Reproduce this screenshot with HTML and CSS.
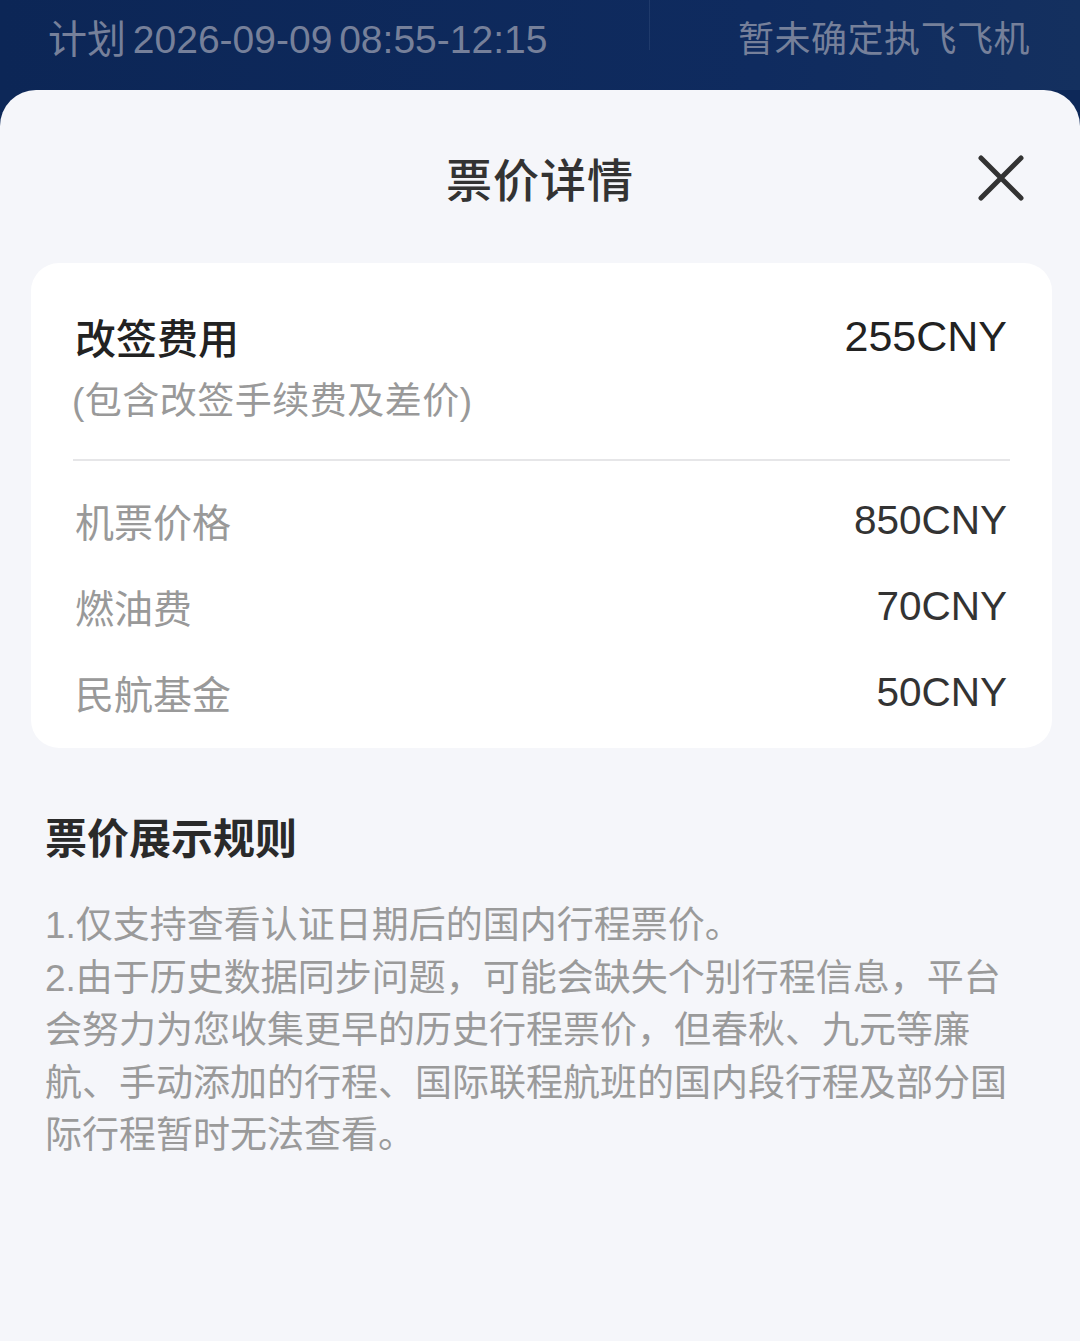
FILE: index.html
```html
<!DOCTYPE html>
<html lang="zh-CN">
<head>
    <meta charset="UTF-8">
    <meta name="viewport" content="width=device-width, initial-scale=1.0">
    <title>票价详情</title>
    <link rel="stylesheet" href="styles.css">
</head>
<body>

    <!-- Flight bar behind the sheet -->
    <div class="flight-bar">
        <span class="flight-time">计划 2026-09-09 08:55-12:15</span>
        <span class="flight-divider"></span>
        <span class="flight-plane">暂未确定执飞飞机</span>
    </div>

    <div class="sheet">
        <div class="sheet-header">
            <h1>票价详情</h1>
            <button class="close-btn" aria-label="关闭">
                <svg width="48" height="48" viewBox="0 0 48 48">
                    <path d="M4 4 L44 44 M44 4 L4 44" stroke="#333" stroke-width="5" stroke-linecap="round" fill="none"/>
                </svg>
            </button>
        </div>

        <div class="price-card">
            <div class="fee-main">
                <div class="fee-row">
                    <span class="fee-title">改签费用</span>
                    <span class="fee-total">255CNY</span>
                </div>
                <p class="fee-note">(包含改签手续费及差价)</p>
            </div>
            <div class="card-line"></div>
            <div class="price-row">
                <span class="price-label">机票价格</span>
                <span class="price-value">850CNY</span>
            </div>
            <div class="price-row">
                <span class="price-label">燃油费</span>
                <span class="price-value">70CNY</span>
            </div>
            <div class="price-row">
                <span class="price-label">民航基金</span>
                <span class="price-value">50CNY</span>
            </div>
        </div>

        <div class="rules">
            <h2>票价展示规则</h2>
            <p>1.仅支持查看认证日期后的国内行程票价。<br>2.由于历史数据同步问题，可能会缺失个别行程信息，平台会努力为您收集更早的历史行程票价，但春秋、九元等廉航、手动添加的行程、国际联程航班的国内段行程及部分国际行程暂时无法查看。</p>
        </div>
    </div>

</body>
</html>
```

FILE: styles.css
```css
body {
    margin: 0;
    background-color: #0d2858;
    font-family: "Liberation Sans", "Noto Sans CJK SC", sans-serif;
}
.flight-bar {
    height: 90px;
    display: flex;
    align-items: flex-start;
    padding: 0 50px 0 48px;
    color: #76809a;
    font-size: 36px;
    line-height: 80px;
    background: linear-gradient(90deg, #0c2656 0%, #0f2b5f 70%, #14305f 100%);
}
.flight-time {
    flex: 1;
    font-size: 39px;
    word-spacing: -4px;
}
.flight-divider {
    width: 1px;
    height: 50px;
    background-color: #1f3a6b;
    margin-right: 88px;
}
.flight-plane {
    letter-spacing: 0.5px;
}
.sheet {
    background-color: #f5f6fa;
    border-radius: 36px 36px 0 0;
    min-height: 1251px;
    padding-bottom: 40px;
    box-sizing: border-box;
}
.sheet-header {
    position: relative;
    height: 173px;
    display: flex;
    align-items: center;
    justify-content: center;
}
.sheet-header h1 {
    margin: 0;
    font-size: 46px;
    font-weight: 500;
    color: #333;
    letter-spacing: 1px;
}
.close-btn {
    position: absolute;
    right: 55px;
    top: 64px;
    padding: 0;
    border: none;
    background: none;
    width: 48px;
    height: 48px;
}
.price-card {
    margin: 0 28px 0 31px;
    background-color: #fff;
    border-radius: 28px;
    padding: 45px 45px 13px 44px;
}
.fee-row {
    display: flex;
    justify-content: space-between;
    align-items: center;
    height: 56px;
    color: #222;
}
.fee-title {
    font-size: 41px;
    font-weight: 500;
}
.fee-total {
    font-size: 43px;
}
.fee-note {
    margin: 14px 0 0 -3px;
    font-size: 37px;
    line-height: 48px;
    color: #999;
    letter-spacing: 0.5px;
}
.card-line {
    height: 2px;
    background-color: #e6e6e8;
    margin: 33px -3px 16px -2px;
}
.price-row {
    display: flex;
    justify-content: space-between;
    align-items: center;
    height: 86px;
}
.price-label {
    font-size: 39px;
    color: #999;
}
.price-value {
    font-size: 40.5px;
    color: #333;
}
.rules {
    padding: 64px 60px 0 45px;
}
.rules h2 {
    margin: 0;
    font-size: 42px;
    line-height: 56px;
    font-weight: 700;
    color: #2a2a2a;
}
.rules p {
    margin: 32px 0 0;
    font-size: 37px;
    line-height: 52.5px;
    color: #9a9a9a;
}
```
